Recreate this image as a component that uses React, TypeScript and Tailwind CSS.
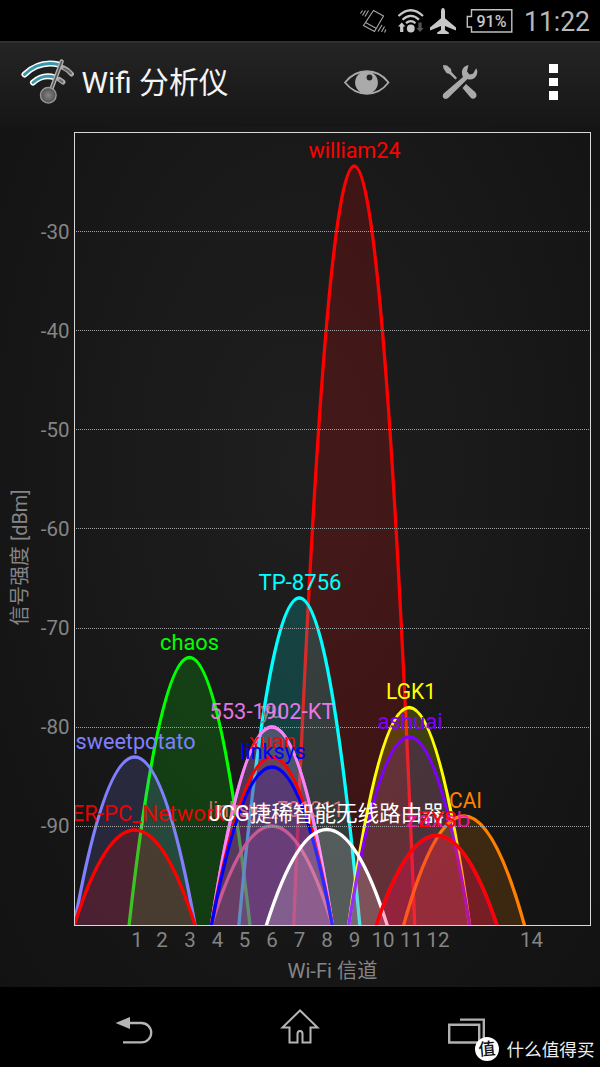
type Network = {
  name: string;
  channel: number;
  peak: number;
  color: string;
  labelX: number;
  labelY: number;
  labelWidth: number;
  opacity?: number;
};

const BASE = 925.5;
const HALF = 60.5;

const networks: Network[] = [
  { name: "william24", channel: 9, peak: 166, color: "#ff0000", labelX: 354.5, labelY: 157.5, labelWidth: 92 },
  { name: "chaos", channel: 3, peak: 657.5, color: "#00ff00", labelX: 189.5, labelY: 649.5, labelWidth: 59 },
  { name: "TP-8756", channel: 7, peak: 598, color: "#00ffff", labelX: 300, labelY: 589.5, labelWidth: 83 },
  { name: "sweetpotato", channel: 1, peak: 757, color: "#8080ff", labelX: 135.5, labelY: 748.5, labelWidth: 120 },
  { name: "LGK1", channel: 11, peak: 707.5, color: "#ffff00", labelX: 411, labelY: 698.5, labelWidth: 50 },
  { name: "linksys_701311", channel: 6, peak: 826, color: "#ff8080", labelX: 276, labelY: 816.5, labelWidth: 135, opacity: 0.8 },
  { name: "yu", channel: 6, peak: 727, color: "#888888", labelX: 271.5, labelY: 718, labelWidth: 22 },
  { name: "553-1902-KT", channel: 6, peak: 727, color: "#ff80ff", labelX: 272, labelY: 718.5, labelWidth: 125, opacity: 0.9 },
  { name: "xuan", channel: 6, peak: 757, color: "#ff0000", labelX: 272.5, labelY: 748.5, labelWidth: 47, opacity: 0.92 },
  { name: "linksys", channel: 6, peak: 767, color: "#0000ff", labelX: 273, labelY: 758.5, labelWidth: 66 },
  { name: "ashuai", channel: 11, peak: 737, color: "#8000ff", labelX: 410, labelY: 728.5, labelWidth: 65 },
  { name: "USER-PC_Network", channel: 1, peak: 830, color: "#ff0000", labelX: 134.5, labelY: 821, labelWidth: 180, opacity: 0.92 },
  { name: "JCG捷稀智能无线路由器", channel: 8, peak: 829.5, color: "#ffffff", labelX: 326.5, labelY: 821, labelWidth: 235 },
  { name: "CAI", channel: 13, peak: 816, color: "#ff8000", labelX: 465.5, labelY: 807.5, labelWidth: 33 },
  { name: "zaxsb", channel: 12, peak: 835.5, color: "#ff10b0", labelX: 438, labelY: 827, labelWidth: 65, opacity: 0.85 },
  { name: "ZYS", channel: 12, peak: 835.5, color: "#ff0000", labelX: 437.5, labelY: 827, labelWidth: 38 },
];

const centerOf = (channel: number) => 107.2 + channel * 27.45;

const channelTicks: [string, number][] = [
  ["1", 137], ["2", 162], ["3", 190], ["4", 217.5], ["5", 244.5], ["6", 272], ["7", 299.5],
  ["8", 327], ["9", 354.5], ["10", 383], ["11", 411.5], ["12", 438], ["14", 531.5],
];

function Chart() {
  return (
    <svg
      className="block h-[860px] w-[600px]"
      viewBox="0 127 600 860"
      fontFamily='Roboto, "Noto Sans CJK SC", sans-serif'
      fontSize="21.5"
    >
      <defs>
        <clipPath id="plot">
          <rect x="75" y="133" width="515.5" height="792.5" />
        </clipPath>
      </defs>
      <g clipPath="url(#plot)">
        {networks.map((n) => {
          const cx = centerOf(n.channel);
          const d = `M${cx - HALF} ${BASE} Q${cx} ${2 * n.peak - BASE} ${cx + HALF} ${BASE}`;
          return <path key={n.name} d={d} fill={n.color} fillOpacity="0.17" stroke={n.color} strokeWidth="3.3" />;
        })}
      </g>
      {[-30, -40, -50, -60, -70, -80, -90].map((v, i) => (
        <g key={v}>
          <line x1="76" x2="590" y1={Math.round(231 + i * 99.15) + 0.5} y2={Math.round(231 + i * 99.15) + 0.5} stroke="#a2a2a2" strokeDasharray="1 1" />
          <text x="69.5" y={238.5 + i * 99.15} textAnchor="end" fill="#858585" fontSize="20.5">{v}</text>
        </g>
      ))}
      <g clipPath="url(#plot)">
        {networks.map((n) => (
          <text
            key={n.name}
            x={n.labelX}
            y={n.labelY}
            textAnchor="middle"
            textLength={n.labelWidth}
            lengthAdjust="spacingAndGlyphs"
            fill={n.color}
            fillOpacity={n.opacity ?? 1}
          >
            {n.name}
          </text>
        ))}
      </g>
      <rect x="74.5" y="132.5" width="516" height="793" fill="none" stroke="#d8d8d8" />
      {channelTicks.map(([label, x]) => (
        <text key={label} x={x} y="946.5" textAnchor="middle" fill="#858585" fontSize="20.5">{label}</text>
      ))}
      <text x="332.5" y="978" textAnchor="middle" textLength="90" lengthAdjust="spacingAndGlyphs" fill="#858585" fontSize="20">Wi-Fi 信道</text>
      <text transform="translate(27 557.5) rotate(-90)" textAnchor="middle" textLength="136" lengthAdjust="spacingAndGlyphs" fill="#858585" fontSize="20">信号强度 [dBm]</text>
    </svg>
  );
}

function VibrateIcon() {
  return (
    <svg className="h-[26px] w-[28px]" viewBox="359 8 28 26" fill="none" stroke="#a8a8a8" strokeWidth="1.1">
      <path d="M373.500 10.500 383.500 16 374.500 31.500 363.500 25.500Z M365.500 22.500 376.500 28.500" />
      <path d="M368.500 10.500 365 16.500M365.500 10.500 362.500 15.500M362.500 10.500 360.500 13.500M382 25 378 31.500M384.500 26.500 381.500 32M386 29.500 384.500 32.500" />
    </svg>
  );
}

function WifiIcon() {
  return (
    <svg className="h-[26px] w-[28px]" viewBox="397 8 28 26" fill="none" stroke="#c8c8c8" strokeWidth="2.2">
      <path d="M398.500 16Q410.800 4.500 423 16M402.500 19.700Q410.800 12 419 19.700M406 23.200Q410.800 19 415.500 23.200" />
      <circle cx="410.800" cy="28.500" r="3.900" fill="#c8c8c8" stroke="none" />
      <path d="m401.700 22.500 3.700 4h-2.100v5.500h-3.200v-5.500H398Z" fill="#c8c8c8" stroke="none" />
      <path d="m420 32-3.700-4h2.100v-5.500h3.200v5.500h2.100Z" fill="#555" stroke="none" />
    </svg>
  );
}

function PlaneIcon() {
  return (
    <svg className="h-[28px] w-[28px]" viewBox="429 7 28 28" fill="#c8c8c8">
      <path d="M443 8c1.4 0 2 1.8 2 3.5v6.8l11 9.2v3l-11-4.6v4.200l3.800 2.400v1.600h-11.600v-1.600l3.800-2.400v-4.200L430 30.500v-3l11-9.200v-6.800c0-1.700.6-3.500 2-3.500Z" />
    </svg>
  );
}

function StatusBar() {
  return (
    <div className="flex h-[41px] items-center bg-black pt-[1px] pl-[359px] text-[#b8b8b8]">
      <VibrateIcon />
      <div className="ml-[10px] h-[26px]"><WifiIcon /></div>
      <div className="ml-[4px] h-[28px]"><PlaneIcon /></div>
      <svg className="ml-[9px] h-[26px] w-[48px]" viewBox="466 8 48 26">
        <path d="M471.500 9.700H511.800V32H471.500V27H467.300V16.500H471.500Z" fill="none" stroke="#c0c0c0" strokeWidth="1.400" />
        <text x="491.500" y="26.500" textAnchor="middle" textLength="30" lengthAdjust="spacingAndGlyphs" fill="#c8c8c8" fontFamily="Roboto, sans-serif" fontWeight="500" fontSize="16">91%</text>
      </svg>
      <svg className="ml-[8px] h-[36px] w-[76px]" viewBox="522 3 76 36">
        <text x="524" y="31" textLength="66" lengthAdjust="spacingAndGlyphs" fill="#b8b8b8" fontFamily="Roboto, sans-serif" fontSize="27">11:22</text>
      </svg>
    </div>
  );
}

function AppLogo() {
  return (
    <svg className="h-[48px] w-[54px]" viewBox="20 58 54 48" fill="none" strokeLinecap="round">
      <defs>
        <radialGradient id="knob">
          <stop offset="0" stopColor="#858585" />
          <stop offset="1" stopColor="#505050" />
        </radialGradient>
      </defs>
      <path d="M24.500 74.500Q39 60.500 58.500 64.500M33 82.500Q43 73.500 55 77.500" stroke="#fff" strokeWidth="6" />
      <path d="M24.500 74.500Q39 60.500 58.500 64.500M33 82.500Q43 73.500 55 77.500" stroke="#3698ad" strokeWidth="3" />
      <path d="M63 67.500Q68 69.500 71.500 74M59.500 79.500 63 82" stroke="#aaa" strokeWidth="5" />
      <path d="M64 68.500Q68 70 71 73.500M60 80 62.500 82" stroke="#666" strokeWidth="2" />
      <path d="M61.700 61.500 51 90" stroke="#b5b5b5" strokeWidth="4.200" />
      <path d="M61.700 61.500 51 90" stroke="#555" strokeWidth="1.600" />
      <circle cx="48.300" cy="95.300" r="7.800" fill="url(#knob)" stroke="#999" strokeWidth="1.400" />
    </svg>
  );
}

function ToolBar() {
  return (
    <header className="flex h-[86px] items-center border-t-2 border-[#303030] bg-linear-to-b from-[#242424] to-[#161616] pb-[6px] pl-[20px]">
      <AppLogo />
      <svg className="ml-[6px] h-[44px] w-[152px]" viewBox="80 60 152 44">
        <text x="81.500" y="92.500" textLength="147" lengthAdjust="spacingAndGlyphs" fill="#f4f4f4" fontFamily='Roboto, "Noto Sans CJK SC", sans-serif' fontSize="30">Wifi 分析仪</text>
      </svg>
      <svg className="ml-[111px] h-[28px] w-[48px]" viewBox="343 68 48 28">
        <path d="M345 82.500C357 67.500 377 67.500 388.500 82.500C377 97.500 357 97.500 345 82.500Z" fill="none" stroke="#aaa" strokeWidth="1.800" />
        <circle cx="366.500" cy="82.500" r="11.400" fill="#aaa" />
        <circle cx="369.500" cy="77.500" r="2.900" fill="#222" />
      </svg>
      <svg className="ml-[50px] h-[38px] w-[40px]" viewBox="441 63 40 38">
        <path d="m443 65 4 .5 4 3.500.5 3 5.500 6-1.500 1.500-6-5.500-3-1-3-4.500Z" fill="#aaa" />
        <path d="m466 84 8.500 7.500c5 4.500-.5 9.500-4 6l-8-9.500Z" fill="#aaa" />
        <path d="M468.500 65c-6 1-8 7-5.500 12L443.700 93.500c-3 4 1.500 7.500 5 4L467.500 79c5 2 10.500-2 9.700-8.500l-1-2.200-3.200 5.500-3.500.6-2.500-3Z" fill="#aaa" />
      </svg>
      <div className="ml-[68px] flex flex-col gap-[5px]">
        <i className="h-[8.5px] w-[9px] bg-white" />
        <i className="h-[8.5px] w-[9px] bg-white" />
        <i className="h-[8.5px] w-[9px] bg-white" />
      </div>
    </header>
  );
}

function NavigationBar() {
  return (
    <nav className="flex h-[80px] items-start bg-black pl-[114px]">
      <svg className="mt-[27px] h-[32px] w-[40px]" viewBox="114 1014 40 32" fill="none" stroke="#b5b5b5" strokeWidth="2.3">
        <path d="M129 1023H141.500A9.700 9.700 0 0 1 141.500 1042.400H123" />
        <path d="M115.500 1023 130 1017V1029Z" fill="#b5b5b5" stroke="none" />
      </svg>
      <svg className="mt-[20px] ml-[126px] h-[40px] w-[40px]" viewBox="280 1007 40 40" fill="none" stroke="#b5b5b5" strokeWidth="2">
        <path d="M300 1010.500 282.500 1027.500H289.500V1042.500H297.500V1034Q297.500 1031 300 1031T302.500 1034V1042.500H310.500V1027.500H317.500Z" />
      </svg>
      <svg className="mt-[30px] ml-[127px] h-[50px] w-[153px]" viewBox="447 1017 153 50">
        <path d="M460 1019.600H483.800V1040M449.200 1024.800H479.200V1042.500H449.200Z" fill="none" stroke="#b0b0b0" strokeWidth="2.4" />
        <circle cx="487" cy="1049" r="12" fill="#fff" />
        <g fontFamily='"Noto Sans CJK SC", sans-serif'>
          <text x="487" y="1055" textAnchor="middle" fill="#111" fontSize="17" fontWeight="500" transform="rotate(-5 487 1049)">值</text>
          <text x="506.500" y="1055.500" textLength="88" fill="#eee" fontSize="17.6">什么值得买</text>
        </g>
      </svg>
    </nav>
  );
}

export default function App() {
  return (
    <div className="flex h-[1067px] w-[600px] flex-col overflow-hidden bg-black">
      <StatusBar />
      <ToolBar />
      <main className="h-[860px] bg-radial-[at_50%_40%] from-[#1f1f1f] to-[#121212]">
        <Chart />
      </main>
      <NavigationBar />
    </div>
  );
}
